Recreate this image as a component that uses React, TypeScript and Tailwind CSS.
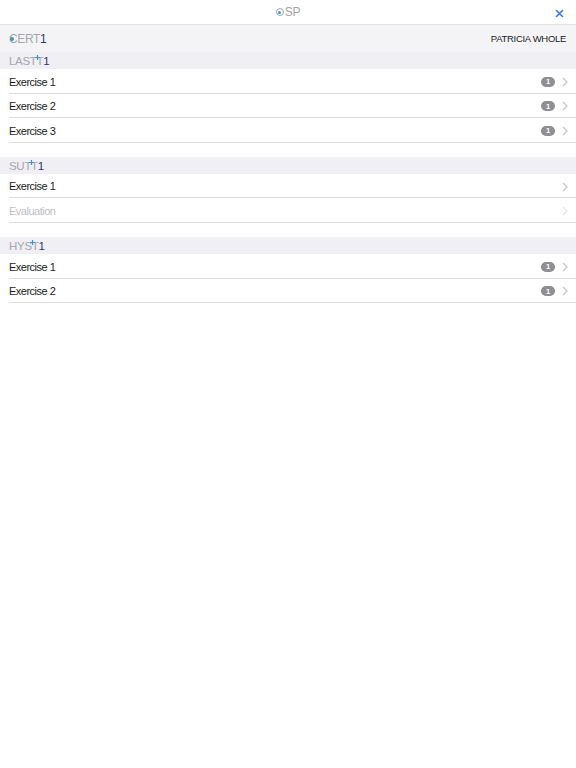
import React from "react";

type Row = { label: string; badge?: boolean; disabled?: boolean };
type Section = { prefix: string; rows: Row[] };

const sections: Section[] = [
    {
        prefix: "LAST",
        rows: [
            { label: "Exercise 1", badge: true },
            { label: "Exercise 2", badge: true },
            { label: "Exercise 3", badge: true },
        ],
    },
    {
        prefix: "SUT",
        rows: [
            { label: "Exercise 1" },
            { label: "Evaluation", disabled: true },
        ],
    },
    {
        prefix: "HYS",
        rows: [
            { label: "Exercise 1", badge: true },
            { label: "Exercise 2", badge: true },
        ],
    },
];

const Chevron: React.FC<{ faded?: boolean }> = ({ faded }) => (
    <svg width="6" height="10" viewBox="0 0 6 10" className={faded ? "text-[#e4e4e8]" : "text-[#c4c4c9]"}>
        <path d="M1 1l4 4-4 4" fill="none" stroke="currentColor" strokeWidth="1.2" />
    </svg>
);

// little blue plus that sits on top of the second T
const Spark: React.FC = () => (
    <svg width="5" height="5" viewBox="0 0 5 5" className="absolute top-[2px] -left-[2px] text-[#3d8fe0]">
        <path d="M2.5 0v5M0 2.5h5" stroke="currentColor" strokeWidth="1.2" />
    </svg>
);

const SectionTitle: React.FC<{ prefix: string }> = ({ prefix }) => (
    <div className="h-[17px] bg-[#efeff4] pl-[9px] pt-[2px] flex items-center text-[11.5px] tracking-[-0.3px] text-[#a6a6ab]">
        <span>{prefix}</span>
        <span className="relative">
            T
            <Spark />
        </span>
        <span className="text-[#35346a]">1</span>
    </div>
);

const App: React.FC = () => {
    return (
        <div className="min-h-screen bg-white font-['Liberation_Sans',Arial,sans-serif]">
            <div className="relative h-[25px] border-b border-[#e3e3e6] flex items-center justify-center">
                <div className="flex items-center text-[12px] tracking-[-0.3px] text-[#a3a3a8]">
                    <span className="relative inline-block w-[8px] h-[8px] rounded-full border border-[#a3a3a8] mr-[1px]">
                        <span className="absolute left-[1.5px] top-[1.5px] w-[3px] h-[3px] rounded-full bg-[#3d8fe0]" />
                    </span>
                    <span>SP</span>
                </div>
                <svg width="9" height="9" viewBox="0 0 9 9" className="absolute right-[12px] top-[9px] text-[#3478f6]">
                    <path d="M1 1l7 7M8 1L1 8" stroke="currentColor" strokeWidth="1.6" />
                </svg>
            </div>

            <div className="h-[27px] bg-[#f4f4f7] flex items-center justify-between pl-[9px] pr-[10px] pt-[1px]">
                <div className="flex items-center text-[12px] tracking-[-0.4px] text-[#a6a6ab]">
                    <span className="relative">
                        C
                        <span className="absolute left-[1px] top-[7px] w-[4px] h-[4px] rounded-full bg-[#3d8fe0]" />
                    </span>
                    <span>ERT</span>
                    <span className="text-[#35346a]">1</span>
                </div>
                <div className="text-[9.5px] tracking-[-0.3px] text-[#222]">PATRICIA WHOLE</div>
            </div>

            {sections.map((section, si) => (
                <div key={si} className={si > 0 ? "mt-[14px]" : ""}>
                    <SectionTitle prefix={section.prefix} />
                    {section.rows.map((row, ri) => (
                        <div key={ri} className="pl-[9px]">
                            <div className="h-[24.6px] pt-[2px] border-b border-[#dcdce0] flex items-center justify-between pr-[8px]">
                                <span
                                    className={`text-[11px] tracking-[-0.5px] ${row.disabled ? "text-[#c0c0c4]" : "text-[#1c1c1e]"}`}
                                >
                                    {row.label}
                                </span>
                                <div className="flex items-center gap-[7px]">
                                    {row.badge && (
                                        <span className="w-[14px] h-[10px] rounded-full bg-[#8e8e93] text-white text-[7.5px] font-bold flex items-center justify-center leading-none">
                                            1
                                        </span>
                                    )}
                                    <Chevron faded={row.disabled} />
                                </div>
                            </div>
                        </div>
                    ))}
                </div>
            ))}
        </div>
    );
};

export default App;
